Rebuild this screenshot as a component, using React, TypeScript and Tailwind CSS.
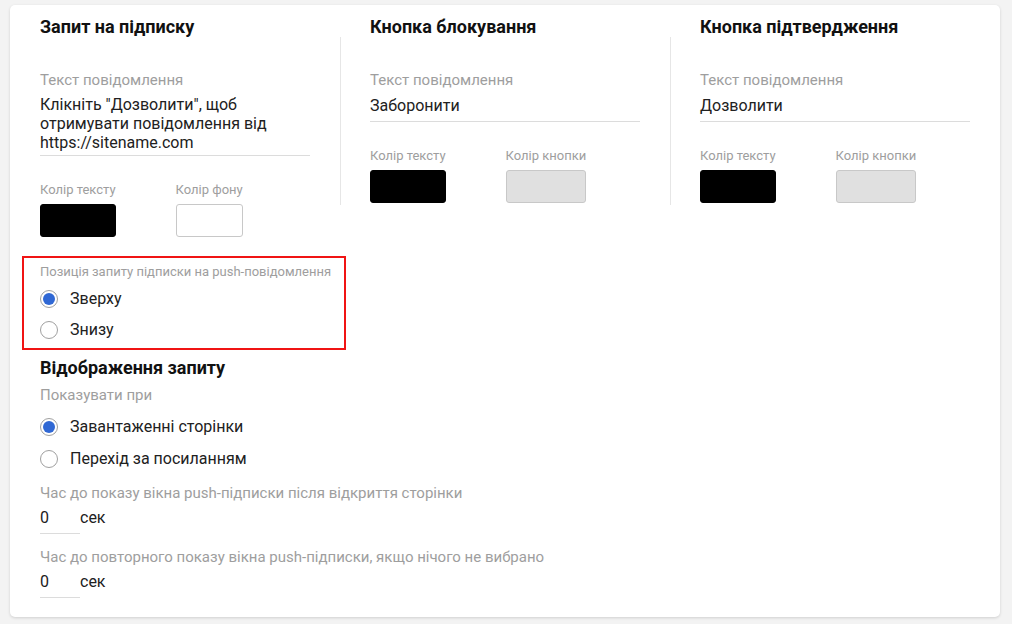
import React from "react";

const font = { fontFamily: "Roboto, 'Noto Sans', Arial, sans-serif" };

// Кольоровий квадрат: ширина дорівнює ширині підпису
const ColorField = ({ label, swatch }: { label: string; swatch: string }) => (
  <div className="inline-flex flex-col">
    <span className="text-[13px] leading-[16px] text-[#9e9e9e] whitespace-nowrap">{label}</span>
    <div className={`mt-[6px] h-[33px] w-full rounded-[3px] ${swatch}`} />
  </div>
);

const Radio = ({ checked, label }: { checked?: boolean; label: string }) => (
  <label className="flex items-center gap-[12px]">
    <span className="flex h-[18px] w-[18px] shrink-0 items-center justify-center rounded-full border border-[#a0a0a0] bg-white">
      {checked && <span className="h-[12px] w-[12px] rounded-full bg-[#3068d4]" />}
    </span>
    <span className="text-[16px] text-[#212121]">{label}</span>
  </label>
);

const ButtonColumn = ({ title, value }: { title: string; value: string }) => (
  <div className="w-[330px]">
    <h2 className="pl-[30px] text-[18px] font-bold leading-[20px] text-[#111]">{title}</h2>
    <div className="border-l border-[#e6e6e6] pl-[29px] pr-[30px] pt-[33px] pb-[2px]">
      <div className="text-[15px] leading-[20px] text-[#9e9e9e]">Текст повідомлення</div>
      <div className="mt-[6px] border-b border-[#dcdcdc] pb-[6px] text-[16px] leading-[19px] text-[#212121]">
        {value}
      </div>
      <div className="mt-[26px] flex gap-[60px]">
        <ColorField label="Колір тексту" swatch="bg-black border border-black" />
        <ColorField label="Колір кнопки" swatch="bg-[#e0e0e0] border border-[#c8c8c8]" />
      </div>
    </div>
  </div>
);

const DelayField = ({ label }: { label: string }) => (
  <div>
    <div className="text-[15px] leading-[18px] text-[#9e9e9e]">{label}</div>
    <div className="mt-[6px] flex items-start">
      <div className="w-[40px] border-b border-[#dcdcdc] pb-[5px] text-[16px] leading-[20px] text-[#212121]">0</div>
      <span className="text-[16px] leading-[20px] text-[#212121]">сек</span>
    </div>
  </div>
);

export default function App() {
  return (
    <div className="min-h-screen bg-[#f3f3f3] pl-[10px] pr-[12px] pt-[5px] pb-[7px]" style={font}>
      <div className="h-[612px] rounded-[5px] bg-white pl-[30px] pt-[12px] shadow-[0_1px_3px_rgba(0,0,0,0.15)]">
        {/* Верхній ряд: три колонки */}
        <div className="flex">
          <div className="w-[300px]">
            <h2 className="text-[18px] font-bold leading-[20px] text-[#111]">Запит на підписку</h2>
            <div className="pr-[30px] pt-[33px]">
              <div className="text-[15px] leading-[20px] text-[#9e9e9e]">Текст повідомлення</div>
              <div className="mt-[5px] border-b border-[#dcdcdc] pb-[3px] text-[16px] leading-[19px] text-[#212121]">
                Клікніть "Дозволити", щоб отримувати повідомлення від https://sitename.com
              </div>
              <div className="mt-[26px] flex gap-[60px]">
                <ColorField label="Колір тексту" swatch="bg-black border border-black" />
                <ColorField label="Колір фону" swatch="bg-white border border-[#c8c8c8]" />
              </div>
            </div>
          </div>
          <ButtonColumn title="Кнопка блокування" value="Заборонити" />
          <ButtonColumn title="Кнопка підтвердження" value="Дозволити" />
        </div>

        {/* Позиція запиту */}
        <div className="-ml-[18px] mt-[19px] w-[324px] border-2 border-[#f01414] pl-[16px] pt-[5px] pb-[3px]">
          <div className="text-[13px] leading-[18px] text-[#9e9e9e]">Позиція запиту підписки на push-повідомлення</div>
          <div className="mt-[2px] flex h-[31px] items-center">
            <Radio checked label="Зверху" />
          </div>
          <div className="flex h-[31px] items-center">
            <Radio label="Знизу" />
          </div>
        </div>

        {/* Відображення запиту */}
        <h2 className="mt-[6px] text-[18px] font-bold leading-[24px] text-[#111]">Відображення запиту</h2>
        <div className="mt-[5px] text-[15px] leading-[20px] text-[#9e9e9e]">Показувати при</div>
        <div className="mt-[6px]">
          <div className="flex h-[32px] items-center">
            <Radio checked label="Завантаженні сторінки" />
          </div>
          <div className="flex h-[32px] items-center">
            <Radio label="Перехід за посиланням" />
          </div>
        </div>
        <div className="mt-[9px] flex flex-col gap-[14px]">
          <DelayField label="Час до показу вікна push-підписки після відкриття сторінки" />
          <DelayField label="Час до повторного показу вікна push-підписки, якщо нічого не вибрано" />
        </div>
      </div>
    </div>
  );
}
